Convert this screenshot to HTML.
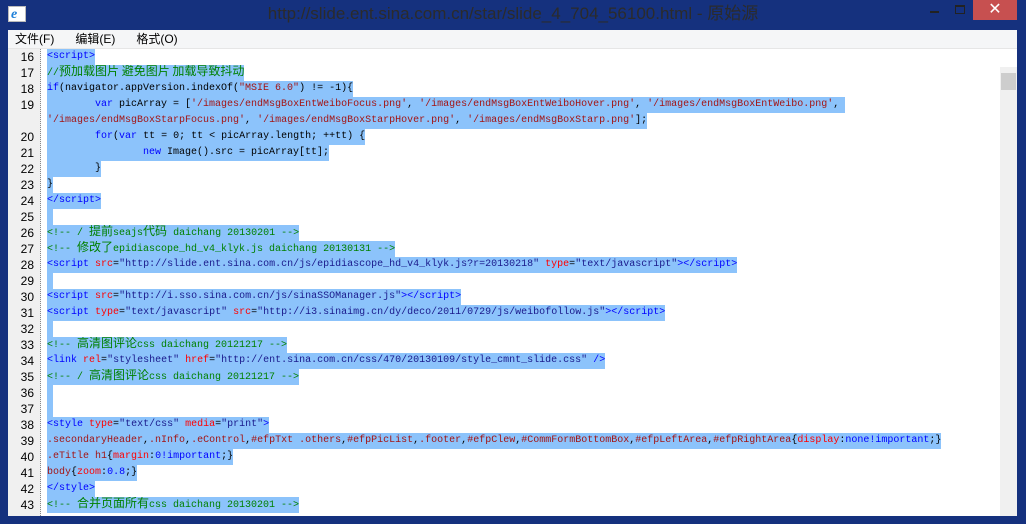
<!DOCTYPE html>
<html><head><meta charset="utf-8"><style>
*{margin:0;padding:0;box-sizing:border-box}
body{width:1026px;height:524px;background:#15317e;position:relative;overflow:hidden;font-family:"Liberation Sans","Noto Sans CJK SC",sans-serif}
#title{position:absolute;left:0;top:0;width:1026px;height:30px;text-align:center;line-height:28px;font-size:17px;color:#2b2b2b}
#icon{position:absolute;left:8px;top:6px;width:18px;height:16px;background:#fff;border:1px solid #bbb}
#icon b{position:absolute;left:2px;top:0;font:bold 14px "Liberation Serif",serif;color:#1e7fd8;font-style:italic}
#close{position:absolute;left:973px;top:0;width:44px;height:20px;background:#c75050;color:#fff;text-align:center;font-size:16px;line-height:19px}
#min{position:absolute;left:930px;top:11px;width:9px;height:2px;background:#222}
#max{position:absolute;left:955px;top:5px;width:10px;height:9px;border:1px solid #222;border-top-width:2px}
#menu{position:absolute;left:8px;top:30px;width:1009px;height:19px;background:#f5f6f7;font-size:12px;color:#000;line-height:19px;border-bottom:1px solid #e6e6e6}
#menu span{margin-left:7px;margin-right:14px}
#gut{position:absolute;left:8px;top:49px;width:33px;height:467px;background:#f0f0f0;border-right:1px dotted #888}
#code{position:absolute;left:41px;top:49px;width:976px;height:467px;background:#fff;overflow:hidden}
#sb{position:absolute;left:1000px;top:67px;width:17px;height:449px;background:#f0f0f0}
#thumb{position:absolute;left:1001px;top:73px;width:15px;height:17px;background:#cdcdcd}
.r{height:16px;line-height:16px;white-space:pre;font-family:"Liberation Mono","Noto Sans CJK SC",monospace;font-size:10px;overflow:hidden}
#gut .r{text-align:right;padding-right:6px;font-family:"Liberation Sans",sans-serif;font-size:12px;color:#000}
#code .r{padding-left:6px}
.h{display:inline-block;height:16px;line-height:16px;background:#8cc3fb;vertical-align:top;overflow:hidden}
.c{font-size:12px;line-height:12px;font-family:"Noto Sans CJK SC",sans-serif}
.t{color:#0000ff}.a{color:#ff0000}.s{color:#1a1a8c}.j{color:#a31515}.g{color:#008000}.k{color:#0000ff}.p{color:#a31515}
</style></head><body>
<div id="title">http://slide.ent.sina.com.cn/star/slide_4_704_56100.html - 原始源</div>
<div id="icon"><b>e</b></div>
<div id="min"></div><div id="max"></div><div id="close">✕</div>
<div id="menu"><span>文件(F)</span><span>编辑(E)</span><span>格式(O)</span></div>
<div id="gut">
<div class="r">16</div><div class="r">17</div><div class="r">18</div><div class="r">19</div><div class="r"> </div><div class="r">20</div><div class="r">21</div><div class="r">22</div><div class="r">23</div><div class="r">24</div><div class="r">25</div><div class="r">26</div><div class="r">27</div><div class="r">28</div><div class="r">29</div><div class="r">30</div><div class="r">31</div><div class="r">32</div><div class="r">33</div><div class="r">34</div><div class="r">35</div><div class="r">36</div><div class="r">37</div><div class="r">38</div><div class="r">39</div><div class="r">40</div><div class="r">41</div><div class="r">42</div><div class="r">43</div>
</div>
<div id="code">
<div class="r"><span class="h t">&lt;script&gt;</span></div>
<div class="r"><span class="h g">//<span class="c">预加载图片 避免图片 加载导致抖动</span></span></div>
<div class="r"><span class="h"><span class="k">if</span>(navigator.appVersion.indexOf(<span class="j">"MSIE 6.0"</span>) != -1){</span></div>
<div class="r"><span class="h">        <span class="k">var</span> picArray = [<span class="j">'/images/endMsgBoxEntWeiboFocus.png'</span>, <span class="j">'/images/endMsgBoxEntWeiboHover.png'</span>, <span class="j">'/images/endMsgBoxEntWeibo.png'</span>, </span></div>
<div class="r"><span class="h"><span class="j">'/images/endMsgBoxStarpFocus.png'</span>, <span class="j">'/images/endMsgBoxStarpHover.png'</span>, <span class="j">'/images/endMsgBoxStarp.png'</span>];</span></div>
<div class="r"><span class="h">        <span class="k">for</span>(<span class="k">var</span> tt = 0; tt &lt; picArray.length; ++tt) {</span></div>
<div class="r"><span class="h">                <span class="k">new</span> Image().src = picArray[tt];</span></div>
<div class="r"><span class="h">        }</span></div>
<div class="r"><span class="h">}</span></div>
<div class="r"><span class="h t">&lt;/script&gt;</span></div>
<div class="r"><span class="h">&nbsp;</span></div>
<div class="r"><span class="h g">&lt;!-- / <span class="c">提前</span>seajs<span class="c">代码</span> daichang 20130201 --&gt;</span></div>
<div class="r"><span class="h g">&lt;!-- <span class="c">修改了</span>epidiascope_hd_v4_klyk.js daichang 20130131 --&gt;</span></div>
<div class="r"><span class="h"><span class="t">&lt;script</span> <span class="a">src</span>=<span class="s">"http://slide.ent.sina.com.cn/js/epidiascope_hd_v4_klyk.js?r=20130218"</span> <span class="a">type</span>=<span class="s">"text/javascript"</span><span class="t">&gt;&lt;/script&gt;</span></span></div>
<div class="r"><span class="h">&nbsp;</span></div>
<div class="r"><span class="h"><span class="t">&lt;script</span> <span class="a">src</span>=<span class="s">"http://i.sso.sina.com.cn/js/sinaSSOManager.js"</span><span class="t">&gt;&lt;/script&gt;</span></span></div>
<div class="r"><span class="h"><span class="t">&lt;script</span> <span class="a">type</span>=<span class="s">"text/javascript"</span> <span class="a">src</span>=<span class="s">"http://i3.sinaimg.cn/dy/deco/2011/0729/js/weibofollow.js"</span><span class="t">&gt;&lt;/script&gt;</span></span></div>
<div class="r"><span class="h">&nbsp;</span></div>
<div class="r"><span class="h g">&lt;!-- <span class="c">高清图评论</span>css daichang 20121217 --&gt;</span></div>
<div class="r"><span class="h"><span class="t">&lt;link</span> <span class="a">rel</span>=<span class="s">"stylesheet"</span> <span class="a">href</span>=<span class="s">"http://ent.sina.com.cn/css/470/20130109/style_cmnt_slide.css"</span> <span class="t">/&gt;</span></span></div>
<div class="r"><span class="h g">&lt;!-- / <span class="c">高清图评论</span>css daichang 20121217 --&gt;</span></div>
<div class="r"><span class="h">&nbsp;</span></div>
<div class="r"><span class="h">&nbsp;</span></div>
<div class="r"><span class="h"><span class="t">&lt;style</span> <span class="a">type</span>=<span class="s">"text/css"</span> <span class="a">media</span>=<span class="s">"print"</span><span class="t">&gt;</span></span></div>
<div class="r"><span class="h"><span class="p">.secondaryHeader</span>,<span class="p">.nInfo</span>,<span class="p">.eControl</span>,<span class="p">#efpTxt .others</span>,<span class="p">#efpPicList</span>,<span class="p">.footer</span>,<span class="p">#efpClew</span>,<span class="p">#CommFormBottomBox</span>,<span class="p">#efpLeftArea</span>,<span class="p">#efpRightArea</span>{<span class="a">display</span>:<span class="k">none!important</span>;}</span></div>
<div class="r"><span class="h"><span class="p">.eTitle h1</span>{<span class="a">margin</span>:<span class="k">0!important</span>;}</span></div>
<div class="r"><span class="h"><span class="p">body</span>{<span class="a">zoom</span>:<span class="k">0.8</span>;}</span></div>
<div class="r"><span class="h t">&lt;/style&gt;</span></div>
<div class="r"><span class="h g">&lt;!-- <span class="c">合并页面所有</span>css daichang 20130201 --&gt;</span></div>
</div>
<div id="sb"></div><div id="thumb"></div>
</body></html>
